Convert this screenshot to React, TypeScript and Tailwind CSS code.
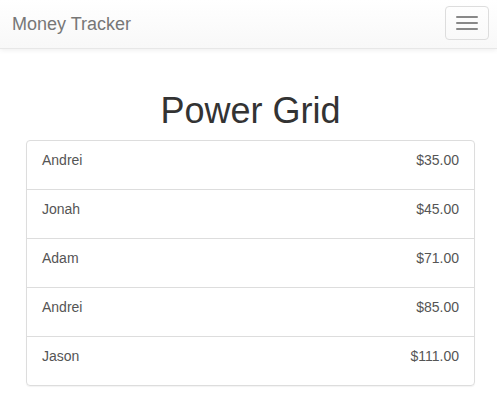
export default function App() {
  const rows: [string, string][] = [
    ["Andrei", "$35.00"],
    ["Jonah", "$45.00"],
    ["Adam", "$71.00"],
    ["Andrei", "$85.00"],
    ["Jason", "$111.00"],
  ];
  return (
    <div className="min-h-[407px] bg-white" style={{ fontFamily: '"Liberation Sans", Arial, sans-serif' }}>
      <nav className="h-[49px] border-b border-[#e7e7e7] bg-gradient-to-b from-white to-[#f8f8f8] shadow-[0_1px_5px_rgba(0,0,0,0.075)] flex items-center justify-between pl-3 pr-2">
        <span className="text-[18px] leading-[20px] text-[#777]">Money Tracker</span>
        <button className="w-[44px] h-[34px] mt-[-3px] rounded-[4px] border border-[#ddd] flex flex-col items-center justify-center gap-[4px]">
          <span className="block w-[22px] h-[2px] rounded-[1px] bg-[#888]" />
          <span className="block w-[22px] h-[2px] rounded-[1px] bg-[#888]" />
          <span className="block w-[22px] h-[2px] rounded-[1px] bg-[#888]" />
        </button>
      </nav>
      <div className="pl-[26px] pr-[22px] pt-[42px]">
        <h1 className="text-[36px] leading-[40px] text-center text-[#333] font-normal">Power Grid</h1>
        <div className="mt-[9px] border border-[#ddd] rounded-[4px] shadow-[0_1px_1px_rgba(0,0,0,0.05)]">
          {rows.map(([n, v], i) => (
            <div
              key={i}
              className={`px-[15px] pt-[9px] flex justify-between text-[14px] leading-[20px] text-[#555] ${i < rows.length - 1 ? "border-b border-[#ddd] h-[49px]" : "h-[48px]"}`}
            >
              <span>{n}</span>
              <span>{v}</span>
            </div>
          ))}
        </div>
      </div>
    </div>
  );
}
